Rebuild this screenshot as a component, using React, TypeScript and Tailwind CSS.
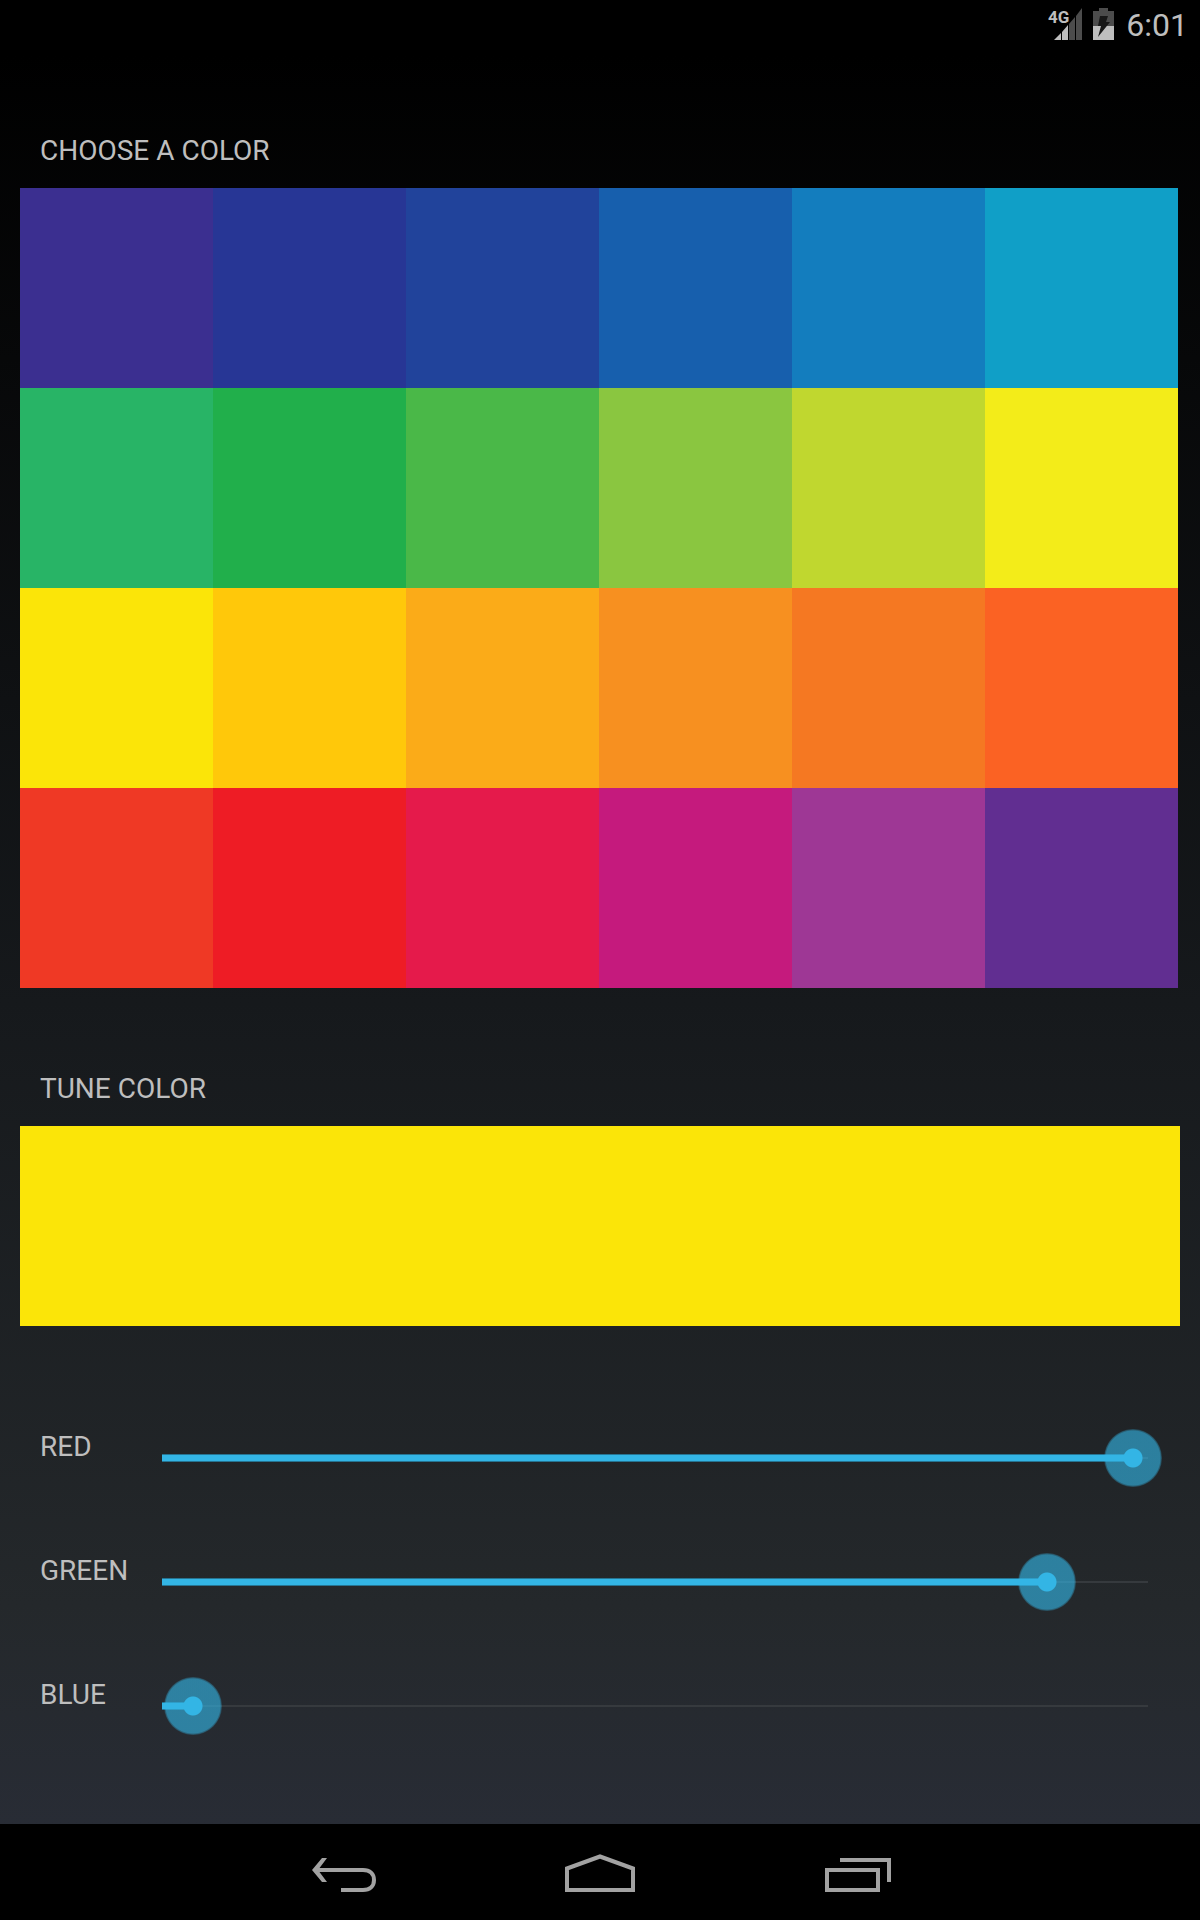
import { useState } from "react";
import type { ReactNode } from "react";

const swatches = [
  ["#3b2f90", "#273695", "#21439b", "#175fad", "#137dbe", "#109fc7"],
  ["#28b466", "#21af4b", "#4ab848", "#8ac640", "#c0d72f", "#f3ec19"],
  ["#fbe508", "#ffc80a", "#fbab18", "#f79020", "#f57822", "#fb6223"],
  ["#ef3925", "#ee1c25", "#e51a4b", "#c51a7d", "#9e3795", "#612e91"],
];

type Rgb = [number, number, number];

function toRgb(hex: string): Rgb {
  const n = parseInt(hex.slice(1), 16);
  return [n >> 16, (n >> 8) & 255, n & 255];
}

function StatusBar() {
  return (
    <header className="flex h-[50px] items-center justify-end pr-3 text-[#bebebe]">
      <svg width="34" height="34" viewBox="0 0 34 34" role="img" aria-label="4G signal">
        <path d="M6 32l7-7v7z" fill="#bebebe" />
        <path d="M14 24l6-7v15h-6z" fill="#bebebe" />
        <path d="M21 16l6-7v23h-6zM28 8l6-8v32h-6z" fill="#4c4c4c" />
        <text x="0" y="15" fontSize="17" fontWeight="700" fontFamily="'Liberation Sans Narrow', Roboto, sans-serif" fill="#bebebe">4G</text>
      </svg>
      <svg className="ml-[11px]" width="21" height="34" viewBox="0 0 21 34" role="img" aria-label="Battery charging">
        <path d="M0 3h6V0h9v3h6v15H0z" fill="#4c4c4c" />
        <path d="M0 18h21v14H0z" fill="#bebebe" />
        <path d="M7 8h8l-2 6h4L5 29l3-11H5z" fill="#181818" />
      </svg>
      <time className="ml-3 text-[32px] leading-10">6:01</time>
    </header>
  );
}

function Heading({ children }: { children: string }) {
  return <h2 className="px-5 pt-[85px] pb-[21px] text-[28px] leading-8">{children}</h2>;
}

function Channel({ name, value, onChange }: { name: string; value: number; onChange: (v: number) => void }) {
  const id = name.toLowerCase();
  return (
    <div className="flex h-[124px] items-center">
      <label htmlFor={id} className="w-[93px] shrink-0 pb-[22px] text-[28px] leading-8">{name}</label>
      <div className="grid grow items-center">
        <div className="col-start-1 row-start-1 mx-[29px] flex h-2 items-center bg-[linear-gradient(#363a3e,#363a3e)] bg-[length:100%_2px] bg-center bg-no-repeat">
          <div className="h-2 border-y border-[#267492] bg-[#33b5e5]" style={{ width: `${(value / 255) * 100}%` }} />
        </div>
        <input
          id={id}
          type="range"
          min={0}
          max={255}
          value={value}
          onChange={(e) => onChange(Number(e.target.value))}
          className="z-10 col-start-1 row-start-1 h-[58px] w-full appearance-none bg-transparent [&::-webkit-slider-thumb]:size-[58px] [&::-webkit-slider-thumb]:appearance-none [&::-webkit-slider-thumb]:rounded-full [&::-webkit-slider-thumb]:bg-[radial-gradient(circle_closest-side,#33b5e5_9px,#33b5e5a0_10px,#33b5e5a0_27px,#33b5e530_29px)]"
        />
      </div>
    </div>
  );
}

function NavButton({ label, children }: { label: string; children: ReactNode }) {
  return (
    <button type="button" aria-label={label} className="flex h-full w-64 items-center justify-center">
      <svg width="80" height="48" viewBox="0 0 80 48" fill="none" stroke="#a2a2a2" strokeWidth="4" aria-hidden="true">
        {children}
      </svg>
    </button>
  );
}

function NavBar() {
  return (
    <nav className="flex h-24 justify-center bg-black">
      <NavButton label="Back">
        <path d="M11 22h48c7 0 11 4 11 10s-4 10-11 10H37" />
        <path d="M8 22L18 10h5l-9 12 9 12h-5z" fill="#a2a2a2" stroke="none" />
      </NavButton>
      <NavButton label="Home">
        <path d="M7 20.500L40 8.500L73 20.500V42H7z" />
      </NavButton>
      <NavButton label="Recent apps">
        <path d="M11 22h51v20H11zM24 12h49v22" />
      </NavButton>
    </nav>
  );
}

export default function App() {
  const [rgb, setRgb] = useState<Rgb>([251, 229, 8]);
  const setChannel = (i: number) => (v: number) => setRgb(rgb.map((c, k) => (k === i ? v : c)) as Rgb);
  return (
    <div className="flex min-h-screen flex-col font-[Roboto,sans-serif] text-[#bebebe]">
      <div className="grow bg-[linear-gradient(#000_3%,#16191c_55%,#24282b_88%,#282c35)]">
        <StatusBar />
        <main className="px-5">
          <Heading>CHOOSE A COLOR</Heading>
          <div className="grid grid-cols-6 pr-0.5">
            {swatches.flat().map((c) => (
              <button key={c} type="button" aria-label={c} onClick={() => setRgb(toRgb(c))} className="h-[200px]" style={{ backgroundColor: c }} />
            ))}
          </div>
          <Heading>TUNE COLOR</Heading>
          <div className="h-[200px]" style={{ backgroundColor: `rgb(${rgb.join(",")})` }} />
          <div className="pt-[70px] pr-[3px] pl-5">
            <Channel name="RED" value={rgb[0]} onChange={setChannel(0)} />
            <Channel name="GREEN" value={rgb[1]} onChange={setChannel(1)} />
            <Channel name="BLUE" value={rgb[2]} onChange={setChannel(2)} />
          </div>
        </main>
      </div>
      <NavBar />
    </div>
  );
}
